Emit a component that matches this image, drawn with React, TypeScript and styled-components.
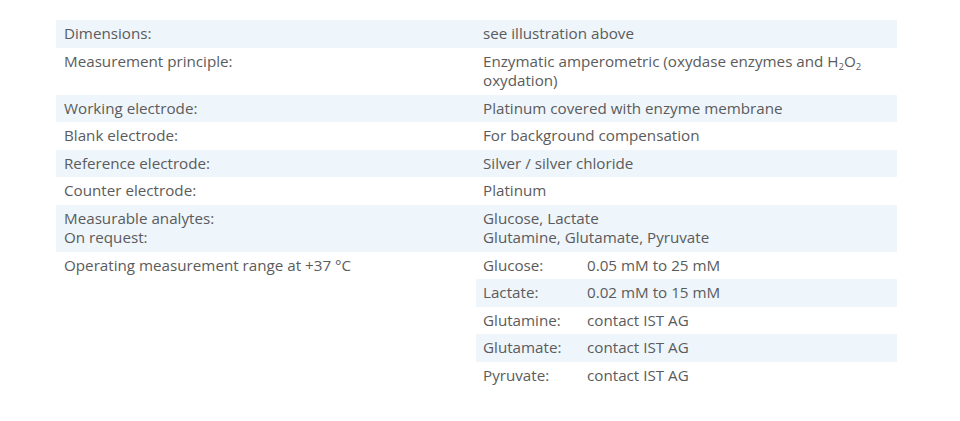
import React from "react";
import styled, { createGlobalStyle } from "styled-components";

const Global = createGlobalStyle`
  html, body { margin: 0; padding: 0; background: #ffffff; }
  body { font-family: "Open Sans", "Liberation Sans", sans-serif; }
`;

const Page = styled.div`
  padding: 20px 63px 0 56px;
  width: 960px;
  box-sizing: border-box;
`;

const Table = styled.div`
  display: flex;
  flex-direction: column;
  width: 841px;
  color: #5b5b5b;
  font-size: 15.2px;
  line-height: 19.5px;
`;

const Row = styled.div<{ $shaded?: boolean }>`
  display: grid;
  grid-template-columns: 420px 1fr;
  background: ${(p) => (p.$shaded ? "#eef5fb" : "transparent")};
`;

const Label = styled.div`
  padding: 4px 8px;
`;

const Value = styled.div`
  padding: 4px 7px;
`;

const Nested = styled.div`
  display: flex;
  flex-direction: column;
`;

const SubRow = styled.div<{ $shaded?: boolean }>`
  display: grid;
  grid-template-columns: 104px 1fr;
  padding: 4px 7px;
  background: ${(p) => (p.$shaded ? "#eef5fb" : "transparent")};
`;

const Sub = styled.sub`
  font-size: 9.5px;
  vertical-align: -3px;
  line-height: 0;
`;

const rows: { label: React.ReactNode; value: React.ReactNode }[] = [
  { label: "Dimensions:", value: "see illustration above" },
  {
    label: "Measurement principle:",
    value: (
      <>
        Enzymatic amperometric (oxydase enzymes and H<Sub>2</Sub>O<Sub>2</Sub>
        <br />
        oxydation)
      </>
    ),
  },
  { label: "Working electrode:", value: "Platinum covered with enzyme membrane" },
  { label: "Blank electrode:", value: "For background compensation" },
  { label: "Reference electrode:", value: "Silver / silver chloride" },
  { label: "Counter electrode:", value: "Platinum" },
  {
    label: (
      <>
        Measurable analytes:
        <br />
        On request:
      </>
    ),
    value: (
      <>
        Glucose, Lactate
        <br />
        Glutamine, Glutamate, Pyruvate
      </>
    ),
  },
];

const ranges = [
  ["Glucose:", "0.05 mM to 25 mM"],
  ["Lactate:", "0.02 mM to 15 mM"],
  ["Glutamine:", "contact IST AG"],
  ["Glutamate:", "contact IST AG"],
  ["Pyruvate:", "contact IST AG"],
];

export default function App() {
  return (
    <>
      <Global />
      <Page>
        <Table>
          {rows.map((r, i) => (
            <Row key={i} $shaded={i % 2 === 0}>
              <Label>{r.label}</Label>
              <Value>{r.value}</Value>
            </Row>
          ))}
          <Row>
            <Label>Operating measurement range at +37 °C</Label>
            <Nested>
              {ranges.map(([k, v], i) => (
                <SubRow key={k} $shaded={i % 2 === 1}>
                  <span>{k}</span>
                  <span>{v}</span>
                </SubRow>
              ))}
            </Nested>
          </Row>
        </Table>
      </Page>
    </>
  );
}
